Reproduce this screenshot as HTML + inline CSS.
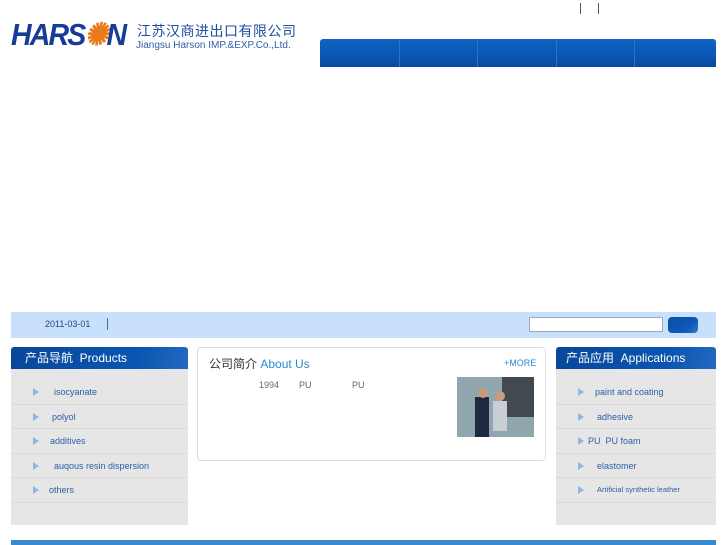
<!DOCTYPE html>
<html><head><meta charset="utf-8">
<style>
*{margin:0;padding:0;box-sizing:border-box}
body{width:727px;height:545px;overflow:hidden;background:#fff;font-family:"Liberation Sans","Noto Sans CJK SC",sans-serif;position:relative}
.abs{position:absolute}
.nav{left:320px;top:39px;width:396px;height:28px;background:linear-gradient(#0f62c4,#0a56b5 60%,#074a9e);border-radius:3px 3px 0 0}
.nav i{position:absolute;top:0;width:1px;height:28px;background:#2d72c8}
.bar{left:11px;top:312px;width:705px;height:26px;background:#c8e0fb}
.ph{height:22px;background:linear-gradient(100deg,#08489a,#0a55b0 70%,#2369c0);color:#fff;font-size:12px;line-height:22px;padding-left:14px;border-radius:3px 3px 0 0}
.side{background:#e6e6e6;width:177px;height:156px}
.side ul{list-style:none;padding-top:11px}
.side li{height:24.5px;border-bottom:1px dotted #cfcfcf;font-size:9px;color:#2d5fa6;line-height:24px;position:relative}
.side li:before{content:"";position:absolute;left:22px;top:8px;border-left:6px solid #8fb7e0;border-top:4px solid transparent;border-bottom:4px solid transparent}
</style></head><body>
<div class="abs" style="left:11px;top:17px;font-family:'Liberation Sans',sans-serif;font-weight:bold;font-style:italic;font-size:31px;color:#173c95;letter-spacing:-2px;line-height:36px;transform:scaleX(0.92);transform-origin:left">HARS<span style="color:#e87a1a">✺</span>N</div>
<div class="abs" style="left:137px;top:22px;font-size:14px;color:#1d4fa0;line-height:18px;letter-spacing:0.5px">江苏汉商进出口有限公司</div>
<div class="abs" style="left:136px;top:40px;font-size:10px;color:#2d5fa6;line-height:12px">Jiangsu Harson IMP.&amp;EXP.Co.,Ltd.</div>
<div class="abs" style="left:580px;top:3px;width:1px;height:11px;background:#555"></div>
<div class="abs" style="left:598px;top:3px;width:1px;height:11px;background:#555"></div>
<div class="abs nav"><i style="left:79px"></i><i style="left:157px"></i><i style="left:236px"></i><i style="left:314px"></i></div>
<div class="abs bar"></div>
<div class="abs" style="left:45px;top:319px;font-size:9px;color:#24467c">2011-03-01</div>
<div class="abs" style="left:107px;top:318px;width:1px;height:12px;background:#3d6fb0"></div>
<div class="abs" style="left:529px;top:317px;width:134px;height:15px;background:#fff;border:1px solid #9ab"></div>
<div class="abs" style="left:668px;top:317px;width:30px;height:16px;background:linear-gradient(135deg,#0a4fa6,#0e5bb8 70%,#3a7ccc);border-radius:4px"></div>

<div class="abs" style="left:11px;top:347px;width:177px">
<div class="ph">产品导航 &nbsp;Products</div>
<div class="side"><ul>
<li style="padding-left:43px">isocyanate</li><li style="padding-left:41px">polyol</li><li style="padding-left:39px">additives</li><li style="padding-left:43px">auqous resin dispersion</li><li style="padding-left:38px">others</li></ul></div></div>

<div class="abs" style="left:197px;top:347px;width:349px;height:114px;border:1px solid #ddd;border-radius:4px">
<div class="abs" style="left:11px;top:7px;font-size:12px;color:#333">公司简介 <span style="color:#2a8ad0">About Us</span></div>
<div class="abs" style="left:306px;top:10px;font-size:9px;color:#2a8ad0">+MORE</div>
<div class="abs" style="left:61px;top:32px;font-size:9px;color:#666">1994</div>
<div class="abs" style="left:101px;top:32px;font-size:9px;color:#666">PU</div>
<div class="abs" style="left:154px;top:32px;font-size:9px;color:#666">PU</div>
<svg class="abs" style="left:259px;top:29px" width="77" height="60"><rect width="77" height="60" fill="#8fa6ae"/><rect x="45" y="0" width="32" height="40" fill="#404a50"/><rect x="18" y="20" width="14" height="40" fill="#1f2840"/><circle cx="26" cy="16" r="5" fill="#c99a80"/><rect x="36" y="24" width="14" height="30" fill="#c9cdd4"/><circle cx="43" cy="19" r="5" fill="#c99a80"/></svg>
</div>

<div class="abs" style="left:556px;top:347px;width:160px">
<div class="ph" style="font-size:12px;padding-left:10px">产品应用 &nbsp;Applications</div>
<div class="side" style="width:160px"><ul>
<li style="padding-left:39px">paint and coating</li><li style="padding-left:41px">adhesive</li><li style="padding-left:32px">PU &nbsp;PU foam</li><li style="padding-left:41px">elastomer</li><li style="padding-left:41px;font-size:7.5px">Artificial synthetic leather</li></ul></div></div>

<div class="abs" style="left:11px;top:540px;width:705px;height:5px;background:#3a8ad0"></div>
</body></html>
